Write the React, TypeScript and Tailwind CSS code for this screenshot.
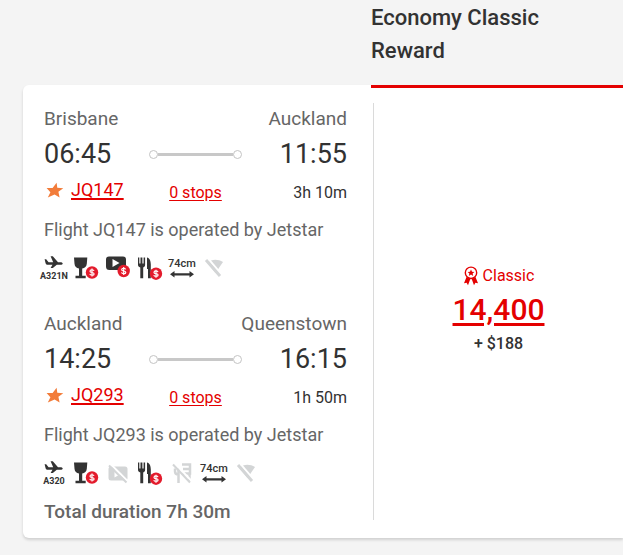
import type { ReactNode } from 'react'

type Amenity =
  | 'drinks'
  | 'video'
  | 'videoOff'
  | 'meals'
  | 'mealsOff'
  | 'pitch'
  | 'wifiOff'

interface Segment {
  flight: string
  from: string
  to: string
  departs: string
  arrives: string
  duration: string
  aircraft: string
  amenities: Amenity[]
}

const segments: Segment[] = [
  {
    flight: 'JQ147',
    from: 'Brisbane',
    to: 'Auckland',
    departs: '06:45',
    arrives: '11:55',
    duration: '3h 10m',
    aircraft: 'A321N',
    amenities: ['drinks', 'video', 'meals', 'pitch', 'wifiOff'],
  },
  {
    flight: 'JQ293',
    from: 'Auckland',
    to: 'Queenstown',
    departs: '14:25',
    arrives: '16:15',
    duration: '1h 50m',
    aircraft: 'A320',
    amenities: ['drinks', 'videoOff', 'meals', 'mealsOff', 'pitch', 'wifiOff'],
  },
]

function Icon({ label, children }: { label: string; children: ReactNode }) {
  return (
    <svg
      className="h-[26px] w-6 overflow-visible text-[#333]"
      viewBox="0 0 24 26"
      fill="currentColor"
      role="img"
      aria-label={label}
    >
      {children}
    </svg>
  )
}

function Paid({ x, y }: { x: number; y: number }) {
  return (
    <g>
      <circle cx={x} cy={y} r="6.2" fill="#e31b2c" />
      <path
        d={`M${x + 2} ${y - 1.6}C${x + 1.6} ${y - 3.2} ${x - 2} ${y - 3.2} ${x - 2} ${y - 1.3}C${x - 2} ${y + 0.5} ${x + 2.1} ${y - 0.5} ${x + 2.1} ${y + 1.4}C${x + 2.1} ${y + 3.2} ${x - 1.8} ${y + 3.2} ${x - 2.2} ${y + 1.4}M${x} ${y - 4}V${y + 4}`}
        fill="none"
        stroke="#fff"
        strokeWidth="1.2"
      />
    </g>
  )
}

function Aircraft({ name }: { name: string }) {
  return (
    <Icon label={name}>
      <path d="M2.600 4.200h1.600l2.400 3h4.600L8.600 1.200h2.200l5.200 6h2.500c1.300 0 2.200.6 2.200 1.300s-.9 1.300-2.200 1.300h-3.700l-4 3.200H8.600l1.900-3.200H6c-1.300 0-2-.5-2.400-1.500z" />
      <text
        x="12"
        y="24"
        textAnchor="middle"
        className="font-['Roboto',sans-serif] text-[9px] font-bold"
      >
        {name}
      </text>
    </Icon>
  )
}

function AmenityIcon({ kind }: { kind: Amenity }) {
  switch (kind) {
    case 'drinks':
      return (
        <Icon label="Drinks for purchase">
          <path d="M0 2.500h13.300l-.5 6.200c-.3 2.900-2 4.500-4.600 4.800v7.200h3.500v2.600H1.500v-2.600H5v-7.200C2.400 13.200.8 11.600.5 8.700z" />
          <Paid x={18} y={17.5} />
        </Icon>
      )
    case 'video':
      return (
        <Icon label="Entertainment for purchase">
          <path
            fillRule="evenodd"
            d="M3 1.500h14a3 3 0 0 1 3 3V13l-4 2H3.500A3.500 3.500 0 0 1 0 11.500v-7a3 3 0 0 1 3-3zM6.500 4v8L13.500 8z"
          />
          <Paid x={17.7} y={16} />
        </Icon>
      )
    case 'videoOff':
      return (
        <Icon label="No entertainment">
          <rect x="2.500" y="6.500" width="19" height="14" rx="2.500" fill="#d3d5d6" />
          <path d="M8.500 9.500v8l7-4z" fill="#fff" />
          <path d="M4.500 4l18 18" stroke="#fff" strokeWidth="2" />
          <path d="M3 5.500l17.500 17" stroke="#d3d5d6" strokeWidth="2" />
        </Icon>
      )
    case 'meals':
      return (
        <Icon label="Meals for purchase">
          <path d="M0 2.600h1.300v6h1.200v-6h1.900v6h1.200v-6h1.500v7.200c0 1.500-.7 2.300-1.900 2.700v10.800H2.300V12.500C.8 12.100 0 11.300 0 9.800zM9 2.600c2.500.4 3.800 3.300 3.800 7v13.700H10V14H9z" />
          <Paid x={18} y={18.7} />
        </Icon>
      )
    case 'mealsOff':
      return (
        <Icon label="No meals">
          <g fill="none" stroke="#d3d5d6">
            <path d="M5 8.500v3c0 2 1 3 3.500 3V23M8.500 8v6" strokeWidth="2.500" />
            <path d="M12 4.500h8v9h-7.500M13 9h7M19.500 13v8" strokeWidth="2.500" />
          </g>
          <path d="M4.500 3l17.500 18.500" stroke="#fff" strokeWidth="2" />
          <path d="M3 4.500l17 18" stroke="#d3d5d6" strokeWidth="2" />
        </Icon>
      )
    case 'pitch':
      return (
        <Icon label="Seat pitch">
          <text
            x="12"
            y="12"
            textAnchor="middle"
            className="font-['Roboto',sans-serif] text-[11px] font-medium"
          >
            74cm
          </text>
          <path d="M0 19.300l4.500-3.300v2.200h15V16l4.500 3.300-4.500 3.300v-2.200h-15v2.200z" />
        </Icon>
      )
    case 'wifiOff':
      return (
        <Icon label="No wifi">
          <path d="M5 7.500C10 4 16 4 21 7L13.500 18z" fill="#d3d5d6" />
          <path d="M6 3.500L20 20" stroke="#fff" strokeWidth="2" />
          <path d="M4 5l14 16" stroke="#d3d5d6" strokeWidth="3" />
        </Icon>
      )
  }
}

function JetstarStar() {
  return (
    <svg className="h-4 w-5" viewBox="0 0 20 16" fill="#f27c3a" aria-hidden="true">
      <path d="M12.600.8l.7 5 6 .4-4.900 3.600 1.200 5.700-5-3-6.800 2.900 2.600-5.200-3.800-4.300 6 .1z" />
    </svg>
  )
}

function Track() {
  return (
    <div className="flex w-[93px] items-center" aria-hidden="true">
      <span className="size-[9px] rounded-full border border-[#c4c4c4] bg-white" />
      <span className="h-[3px] flex-1 bg-[#c8c8c8]" />
      <span className="size-[9px] rounded-full border border-[#c4c4c4] bg-white" />
    </div>
  )
}

function SegmentDetails({ segment }: { segment: Segment }) {
  return (
    <section>
      <div className="flex justify-between text-[19px] leading-6 text-[#666]">
        <span>{segment.from}</span>
        <span>{segment.to}</span>
      </div>
      <div className="mt-[3px] flex h-10 items-center justify-between text-[27px] text-[#323232]">
        <span>{segment.departs}</span>
        <Track />
        <span>{segment.arrives}</span>
      </div>
      <div className="grid h-8 grid-cols-3 items-baseline text-base leading-8 text-[#323232]">
        <div className="flex items-center gap-[7px]">
          <JetstarStar />
          <a
            href="#flight"
            className="text-lg leading-8 text-[#e40000] underline decoration-2 underline-offset-2"
          >
            {segment.flight}
          </a>
        </div>
        <a href="#stops" className="text-center text-[#e40000] underline underline-offset-2">
          0 stops
        </a>
        <span className="text-right">{segment.duration}</span>
      </div>
      <p className="mt-3 text-lg leading-6 whitespace-nowrap text-[#666]">
        Flight {segment.flight} is operated by Jetstar
      </p>
      <div className="mt-[13px] -ml-0.5 flex gap-2">
        <Aircraft name={segment.aircraft} />
        {segment.amenities.map(kind => (
          <AmenityIcon key={kind} kind={kind} />
        ))}
      </div>
    </section>
  )
}

function RewardIcon() {
  return (
    <svg
      className="h-5 w-4"
      viewBox="0 0 16 20"
      fill="none"
      stroke="currentColor"
      strokeWidth="1.4"
      aria-hidden="true"
    >
      <circle cx="8" cy="6.8" r="5.7" />
      <path
        d="M8 3.500l1 2.200 2.400.2-1.800 1.600.6 2.400L8 8.600 5.800 9.900l.6-2.400-1.800-1.600 2.400-.2z"
        fill="currentColor"
        stroke="none"
      />
      <path
        d="M3.500 11L1 17.300l2.600-.6 1.400 2.600 2.300-6.300zM12.500 11l2.500 6.300-2.600-.6-1.400 2.600L8.700 13z"
        fill="currentColor"
        stroke="none"
      />
    </svg>
  )
}

export default function App() {
  return (
    <main className="min-h-screen bg-[#f4f4f4] pb-4 pl-[23px] font-['Roboto','Liberation_Sans',sans-serif]">
      <header className="flex pt-px pb-[18px]">
        <div className="w-[348px] shrink-0" />
        <h2 className="max-w-[200px] text-[22px] leading-[33px] font-medium text-[#323232]">
          Economy Classic Reward
        </h2>
      </header>

      <div className="flex rounded-l-md bg-white shadow-[0_2px_3px_rgba(0,0,0,0.15)]">
        <div className="w-[348px] shrink-0 pt-[22px] pr-6 pb-[14px] pl-[21px]">
          <div className="flex flex-col gap-[31px]">
            {segments.map(segment => (
              <SegmentDetails key={segment.flight} segment={segment} />
            ))}
          </div>
          <p className="mt-[14px] text-[19px] leading-6 font-medium text-[#666]">
            Total duration 7h 30m
          </p>
        </div>

        {/* Reward price */}
        <div className="flex flex-1 border-t-[3px] border-[#e40000] pt-[15px] pb-[18px] pl-0.5">
          <div className="flex flex-1 flex-col items-center justify-center border-l border-[#dadada] pb-1">
            <div className="flex items-center gap-1 text-base leading-6 text-[#e40000]">
              <RewardIcon />
              Classic
            </div>
            <a
              href="#select"
              className="text-[30px] leading-[44px] font-medium text-[#e40000] underline decoration-3 underline-offset-3"
            >
              14,400
            </a>
            <span className="text-base leading-6 font-medium text-[#323232]">+ $188</span>
          </div>
        </div>
      </div>
    </main>
  )
}
